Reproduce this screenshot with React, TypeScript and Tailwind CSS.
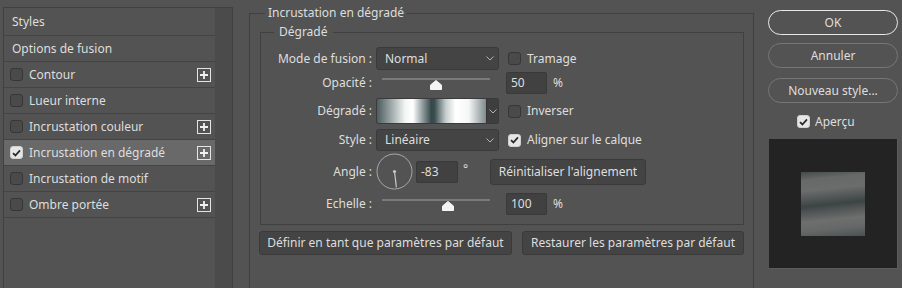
import clsx from "clsx";

interface LayerItem {
  label: string
  plus?: boolean
  checked?: boolean
  selected?: boolean
}

const layers: LayerItem[] = [
  { label: "Contour", plus: true },
  { label: "Lueur interne" },
  { label: "Incrustation couleur", plus: true },
  { label: "Incrustation en dégradé", plus: true, checked: true, selected: true },
  { label: "Incrustation de motif" },
  { label: "Ombre portée", plus: true },
]

function Check({ checked }: { checked?: boolean }) {
  return (
    <span
      className={clsx(
        "w-[13px] h-[13px] rounded-[3px] border flex items-center justify-center shrink-0",
        checked ? "bg-[#e6e6e6] border-[#d0d0d0]" : "bg-[#4a4a4a] border-[#363636]"
      )}
    >
      {checked && (
        <svg width="9" height="8" viewBox="0 0 9 8">
          <path d="M1 4.2 L3.4 6.5 L8 1.4" stroke="#2a2a2a" strokeWidth="1.8" fill="none" />
        </svg>
      )}
    </span>
  )
}

function Chevron() {
  return (
    <svg width="8" height="5" viewBox="0 0 8 5" className="shrink-0">
      <path d="M0.5 0.5 L4 4 L7.5 0.5" stroke="#b4b4b4" strokeWidth="1" fill="none" />
    </svg>
  )
}

function Plus() {
  return (
    <svg width="14" height="14" viewBox="0 0 14 14" className="ml-auto shrink-0">
      <rect x="0.5" y="0.5" width="13" height="13" stroke="#e4e4e4" fill="none" />
      <path d="M7 3 V11 M3 7 H11" stroke="#f0f0f0" strokeWidth="1.8" />
    </svg>
  )
}

function Slider({ at }: { at: number }) {
  return (
    <div className="ml-[10px] w-[108px] h-full flex flex-col items-start">
      <div className="mt-[6px] w-full h-[2px] bg-[#7a7a7a]" />
      <svg width="12" height="10" viewBox="0 0 12 10" style={{ marginLeft: at - 6 }}>
        <path d="M6 0.5 L11.5 5 L11.5 9.5 L0.5 9.5 L0.5 5 Z" fill="#f4f4f4" stroke="#f4f4f4" strokeLinejoin="round" />
      </svg>
    </div>
  )
}

function Field({ value, w }: { value: string; w: string }) {
  return (
    <div className={clsx(w, "h-[22px] bg-[#414141] border border-[#393939] rounded-[2px] pl-[4px] flex items-center shrink-0")}>
      {value}
    </div>
  )
}

function Label({ text }: { text: string }) {
  return <div className="w-[111px] text-right shrink-0">{text}</div>
}

export default function App() {
  return (
    <div className="w-[902px] h-[288px] overflow-hidden bg-[#535353] flex items-start text-[12px] leading-[16px] text-[#dedede] [font-family:'Noto_Sans',sans-serif]">
      <div className="ml-[3px] mt-[7px] w-[230px] h-[300px] border border-[#404040] flex shrink-0">
        <div className="w-[211px]">
          <div className="h-[28px] border-b border-[#444444] flex items-center pl-[8px]">Styles</div>
          <div className="h-[26px] border-b border-[#444444] flex items-center pl-[8px]">Options de fusion</div>
          {layers.map((item) => (
            <div
              key={item.label}
              className={clsx(
                "h-[26px] border-b border-[#444444] flex items-center pl-[6px] pr-[4px]",
                item.selected && "bg-[#696969]"
              )}
            >
              <Check checked={item.checked} />
              <span className="ml-[6px]">{item.label}</span>
              {item.plus && <Plus />}
            </div>
          ))}
        </div>
        <div className="flex-1 bg-[#4b4b4b]" />
      </div>

      <fieldset className="ml-[16px] mt-[5px] w-[505px] h-[300px] border border-[#404040] pl-[10px] pt-[3px] shrink-0">
        <legend className="ml-[5px] px-[3px]">Incrustation en dégradé</legend>

        <fieldset className="w-[484px] border border-[#404040] pt-[7px] pb-[9px]">
          <legend className="ml-[13px] px-[5px]">Dégradé</legend>

          <div className="h-[23px] flex items-center">
            <Label text="Mode de fusion :" />
            <div className="ml-[4px] w-[123px] h-[23px] bg-[#444444] border border-[#3a3a3a] rounded-[3px] flex items-center pl-[8px] pr-[4px]">
              <span>Normal</span>
              <span className="ml-auto"><Chevron /></span>
            </div>
            <span className="ml-[9px]"><Check /></span>
            <span className="ml-[6px]">Tramage</span>
          </div>

          <div className="mt-[2px] h-[22px] flex items-center">
            <Label text="Opacité :" />
            <Slider at={54} />
            <span className="ml-[16px]"><Field value="50" w="w-[41px]" /></span>
            <span className="ml-[6px]">%</span>
          </div>

          <div className="mt-[4px] h-[26px] flex items-center">
            <Label text="Dégradé :" />
            <div className="ml-[4px] w-[123px] h-[26px] border border-[#3a3a3a] rounded-[2px] flex overflow-hidden">
              <div className="flex-1 bg-[linear-gradient(to_right,#4c5b5e_0%,#9ea8a9_13%,#f4f6f6_26%,#ffffff_33%,#8d9a9c_42%,#34474b_50%,#3d5155_53%,#c5cccc_63%,#ffffff_72%,#f6f7f7_84%,#7e8b8c_100%)]" />
              <div className="w-[12px] bg-[#3e3e3e] border-l border-[#333333] flex items-center justify-center">
                <Chevron />
              </div>
            </div>
            <span className="ml-[9px]"><Check /></span>
            <span className="ml-[6px]">Inverser</span>
          </div>

          <div className="mt-[5px] h-[22px] flex items-center">
            <Label text="Style :" />
            <div className="ml-[4px] w-[123px] h-[22px] bg-[#444444] border border-[#3a3a3a] rounded-[3px] flex items-center pl-[8px] pr-[4px]">
              <span>Linéaire</span>
              <span className="ml-auto"><Chevron /></span>
            </div>
            <span className="ml-[9px]"><Check checked /></span>
            <span className="ml-[6px]">Aligner sur le calque</span>
          </div>

          <div className="mt-[2px] h-[37px] flex items-center">
            <Label text="Angle :" />
            <svg width="37" height="37" viewBox="0 0 37 37" className="ml-[4px] shrink-0">
              <circle cx="18.5" cy="18.5" r="17.5" stroke="#a8a8a8" fill="none" />
              <circle cx="18.5" cy="18.5" r="1.6" fill="#c8c8c8" />
              <line x1="18.5" y1="18.5" x2="20.4" y2="34.4" stroke="#c8c8c8" strokeWidth="1.2" />
            </svg>
            <span className="ml-[3px]"><Field value="-83" w="w-[42px]" /></span>
            <span className="ml-[5px] w-[10px] self-start mt-[8px]">°</span>
            <div className="ml-[17px] w-[156px] h-[26px] bg-[#444444] border border-[#3a3a3a] rounded-[3px] flex items-center justify-center">
              Réinitialiser l'alignement
            </div>
          </div>

          <div className="mt-[3px] h-[22px] flex items-center">
            <Label text="Echelle :" />
            <Slider at={66} />
            <span className="ml-[16px]"><Field value="100" w="w-[41px]" /></span>
            <span className="ml-[6px]">%</span>
          </div>
        </fieldset>

        <div className="mt-[6px] ml-[-1px] flex gap-[10px]">
          <div className="w-[253px] h-[24px] bg-[#444444] border border-[#3a3a3a] rounded-[3px] flex items-center justify-center">
            Définir en tant que paramètres par défaut
          </div>
          <div className="w-[222px] h-[24px] bg-[#444444] border border-[#3a3a3a] rounded-[3px] flex items-center justify-center">
            Restaurer les paramètres par défaut
          </div>
        </div>
      </fieldset>

      <div className="ml-[14px] mt-[10px] w-[130px] flex flex-col shrink-0">
        <div className="h-[25px] rounded-full border-[1.5px] border-[#e8e8e8] flex items-center justify-center">OK</div>
        <div className="mt-[8px] h-[25px] rounded-full border border-[#767676] flex items-center justify-center">Annuler</div>
        <div className="mt-[10px] h-[25px] rounded-full border border-[#767676] flex items-center justify-center">Nouveau style...</div>
        <div className="mt-[12px] h-[13px] flex items-center pl-[29px]">
          <Check checked />
          <span className="ml-[5px]">Aperçu</span>
        </div>
        <div className="mt-[11px] ml-[1px] w-[129px] h-[130px] bg-[#232323] border-b border-r border-[#5c5c5c] flex items-center justify-center">
          <div className="w-[64px] h-[64px] bg-[linear-gradient(174deg,#434b4b_0%,#676868_12%,#6b6c6c_28%,#3c4444_50%,#555858_60%,#6d6e6e_72%,#666868_85%,#4a5151_100%)]" />
        </div>
      </div>
    </div>
  )
}
